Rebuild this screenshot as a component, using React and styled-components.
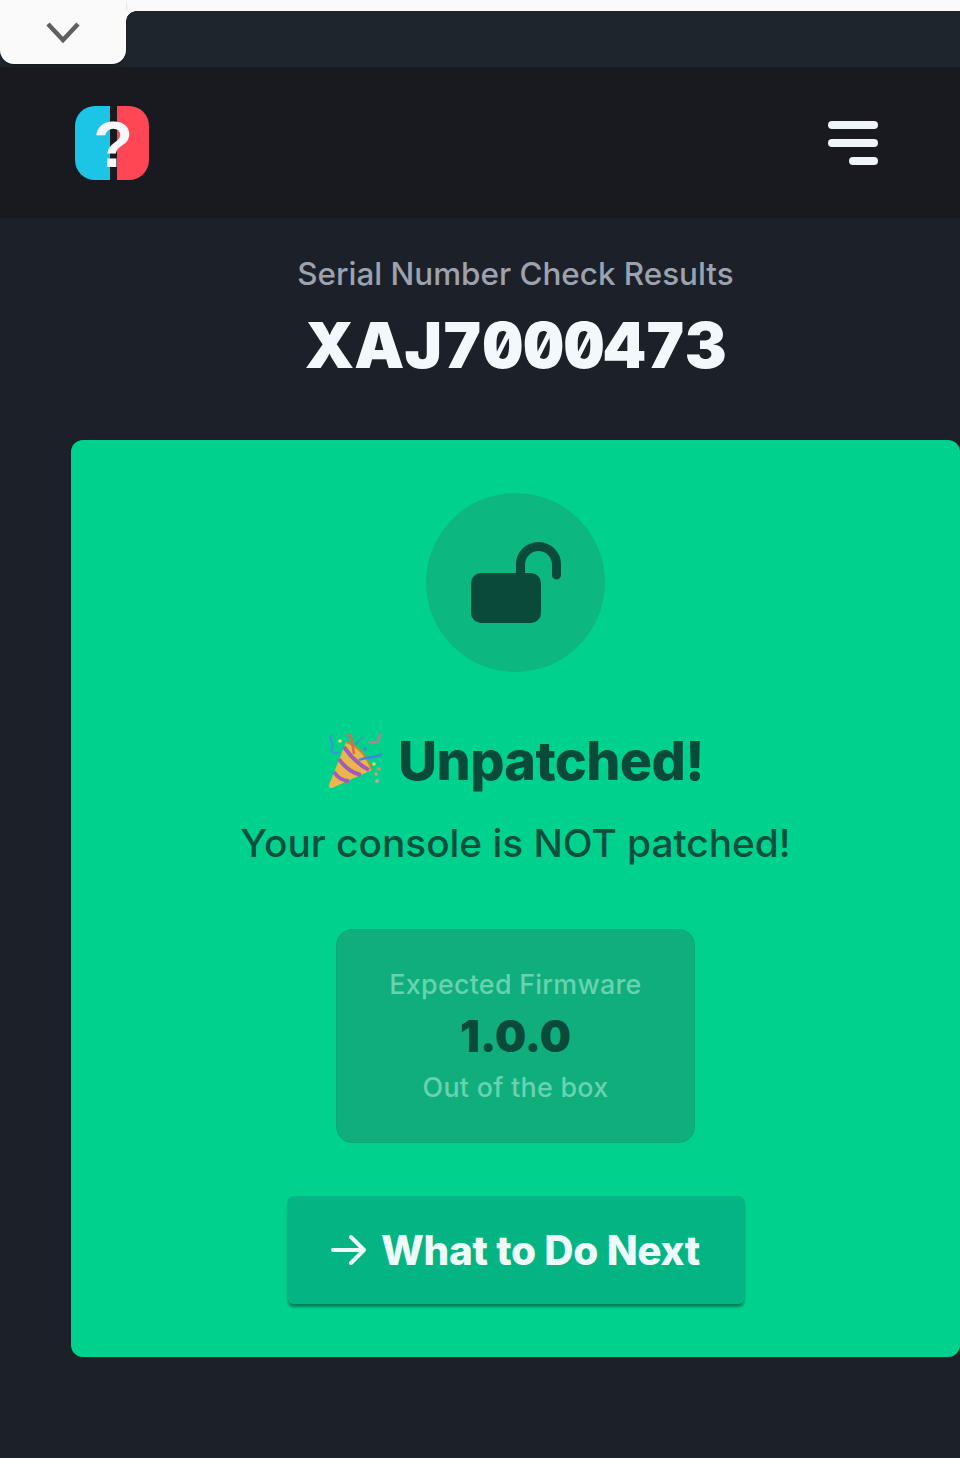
import React from 'react'
import styled, { createGlobalStyle } from 'styled-components'

const GlobalStyle = createGlobalStyle`
  html, body {
    margin: 0;
    padding: 0;
    background: #1c2129;
  }

  * {
    box-sizing: border-box;
  }
`

const Page = styled.div`
  position: relative;
  width: 960px;
  height: 1458px;
  overflow: hidden;
  display: flex;
  flex-direction: column;
  background: #1c2129;
  font-family: Inter, "Liberation Sans", sans-serif;
`

const TopStrip = styled.div`
  height: 11px;
  background: #fafafb;
`

const BrowserBar = styled.div`
  height: 56px;
  background: #1f252c;
`

const CollapseTab = styled.div`
  position: absolute;
  top: 0;
  left: 0;
  width: 126px;
  height: 64px;
  display: flex;
  align-items: center;
  justify-content: center;
  background: #fafafb;
  border-radius: 0 0 14px 14px;
  box-shadow: 0 2px 3px -1px rgba(0, 0, 0, 0.5);

  /* inner rounded corner where the bar starts next to the tab */
  &::after {
    content: '';
    position: absolute;
    top: 11px;
    left: 126px;
    width: 10px;
    height: 10px;
    background: radial-gradient(circle at 100% 100%, transparent 9.5px, #fafafb 10px);
  }
`

const Header = styled.header`
  height: 151px;
  padding: 0 82px 0 75px;
  display: flex;
  align-items: center;
  justify-content: space-between;
  background: #181a20;
`

const Main = styled.main`
  display: flex;
  flex-direction: column;
  align-items: center;
  padding-left: 71px;
`

const Eyebrow = styled.p`
  margin: 36px 0 0;
  font-size: 31.4px;
  line-height: 40px;
  font-weight: 500;
  color: #9ca3af;
`

const SerialNumber = styled.h1`
  margin: 12px 0 0;
  font-family: Inter, "DejaVu Sans Mono", monospace;
  font-size: 63px;
  line-height: 78px;
  font-weight: 900;
  font-variant-numeric: slashed-zero tabular-nums;
  font-feature-settings: "zero" 1, "tnum" 1;
  color: #f3f8fd;
`

const ResultCard = styled.section`
  width: 889px;
  height: 917px;
  margin-top: 56px;
  padding-top: 53px;
  display: flex;
  flex-direction: column;
  align-items: center;
  background: #00d28e;
  border-radius: 12px;
`

const IconCircle = styled.div`
  width: 179px;
  height: 179px;
  display: flex;
  align-items: center;
  justify-content: center;
  border-radius: 50%;
  background: #0cb880;
`

const Headline = styled.h2`
  margin: 57px 0 0;
  display: flex;
  align-items: center;
  gap: 13px;
  font-size: 53.8px;
  line-height: 64px;
  font-weight: 800;
  letter-spacing: -0.6px;
  color: #0a4a3a;
`

const Subline = styled.p`
  margin: 27px 0 0;
  font-size: 38.8px;
  line-height: 46px;
  font-weight: 500;
  color: #0c4f3d;
`

const FirmwareBox = styled.div`
  width: 359px;
  height: 214px;
  margin-top: 63px;
  display: flex;
  flex-direction: column;
  align-items: center;
  padding-top: 37px;
  background: #10ae7c;
  border: 1px solid #0daa79;
  border-radius: 16px;
`

const FirmwareLabel = styled.div`
  font-size: 26.8px;
  line-height: 34px;
  font-weight: 500;
  letter-spacing: 0.3px;
  color: #69d2b0;
`

const FirmwareVersion = styled.div`
  margin-top: 9px;
  font-size: 44px;
  line-height: 52px;
  font-weight: 900;
  color: #0a4a3a;
`

const FirmwareNote = styled(FirmwareLabel)`
  margin-top: 8px;
`

const NextButton = styled.button`
  width: 458px;
  height: 108px;
  margin-top: 53px;
  display: flex;
  align-items: center;
  justify-content: center;
  gap: 14px;
  padding: 0;
  border: none;
  border-radius: 7px;
  background: #04b482;
  box-shadow: 0 4px 3px -1px rgba(5, 80, 60, 0.65);
  font-family: inherit;
  font-size: 40.5px;
  font-weight: 800;
  letter-spacing: -0.3px;
  color: #eefaf9;
`

const ChevronIcon = () => (
  <svg width="34" height="22" viewBox="0 0 34 22" fill="none">
    <path d="M2 3 L17 19 L32 3" stroke="#5f5f5f" strokeWidth="4.5" />
  </svg>
)

const Logo = () => (
  <svg width="74" height="74" viewBox="0 0 74 74" overflow="visible">
    <path d="M35 0 H20 A20 20 0 0 0 0 20 V54 A20 20 0 0 0 20 74 H35 Z" fill="#1cc4e6" />
    <path d="M42 0 H54 A20 20 0 0 1 74 20 V54 A20 20 0 0 1 54 74 H42 Z" fill="#ff4655" />
    <text
      x="38"
      y="61"
      textAnchor="middle"
      fontFamily="'Liberation Sans', sans-serif"
      fontSize="65"
      fontWeight="700"
      fill="#f6f8fa"
    >
      ?
    </text>
  </svg>
)

const MenuIcon = () => (
  <svg width="50" height="44" viewBox="0 0 50 44" fill="#eef4f8">
    <rect x="0" y="0" width="50" height="8" rx="4" />
    <rect x="0" y="18" width="50" height="8" rx="4" />
    <rect x="21" y="36" width="29" height="8" rx="4" />
  </svg>
)

const LockIcon = () => (
  <svg width="90" height="82" viewBox="0 0 90 82" fill="none">
    <rect x="0" y="31" width="70" height="50" rx="10" fill="#0a4a3a" />
    <path
      d="M49.5 34 V22.5 A18 18 0 0 1 85.5 22.5 V33"
      stroke="#0a4a3a"
      strokeWidth="9"
      strokeLinecap="round"
    />
  </svg>
)

const PartyPopper = () => (
  <svg width="58" height="58" viewBox="0 0 58 58" fill="none">
    <path d="M2 53 C1 55 3 57 5 56 L45 38 C40 24 30 13 19 10 Z" fill="#e8b64c" />
    <path d="M7 40 C11 46 16 49 22 49 M12 27 C18 36 26 41 34 43 M17 15 C24 25 32 33 42 38" stroke="#a45bb5" strokeWidth="4" />
    <path d="M19 10 C30 13 40 24 45 38" stroke="#c08a2e" strokeWidth="2" />
    <path d="M5 3 C0 8 9 11 5 16 C3 20 8 23 12 20" stroke="#3f8fdc" strokeWidth="2" />
    <path d="M20 3 C24 2 24 6 25 10 L27 22" stroke="#e0684f" strokeWidth="2.5" />
    <path d="M42 12 C46 6 47 14 51 9 C54 5 50 3 55 3" stroke="#b5808a" strokeWidth="2.5" />
    <path d="M32 28 C40 24 46 27 55 22" stroke="#4a7fe0" strokeWidth="2.5" />
    <path d="M28 13 C32 10 32 6 36 5" stroke="#2f9fb5" strokeWidth="2" />
    <circle cx="13" cy="9" r="1.8" fill="#d9e05b" />
    <circle cx="38" cy="17" r="1.8" fill="#4a7fe0" />
    <circle cx="47" cy="32" r="1.8" fill="#d9e05b" />
    <circle cx="52" cy="37" r="1.8" fill="#d98f6a" />
    <circle cx="49" cy="42" r="1.8" fill="#d9a05b" />
    <circle cx="50" cy="49" r="2" fill="#b9a6a0" />
  </svg>
)

const ArrowIcon = () => (
  <svg width="36" height="32" viewBox="0 0 36 32" fill="none">
    <path
      d="M2 16 H33 M20 3 L33 16 L20 29"
      stroke="#eefaf9"
      strokeWidth="4"
      strokeLinecap="round"
      strokeLinejoin="round"
    />
  </svg>
)

const App = () => (
  <Page>
    <GlobalStyle />
    <TopStrip />
    <BrowserBar />
    <CollapseTab>
      <ChevronIcon />
    </CollapseTab>
    <Header>
      <Logo />
      <MenuIcon />
    </Header>
    <Main>
      <Eyebrow>Serial Number Check Results</Eyebrow>
      <SerialNumber>XAJ7000473</SerialNumber>
      <ResultCard>
        <IconCircle>
          <LockIcon />
        </IconCircle>
        <Headline>
          <PartyPopper />
          Unpatched!
        </Headline>
        <Subline>Your console is NOT patched!</Subline>
        <FirmwareBox>
          <FirmwareLabel>Expected Firmware</FirmwareLabel>
          <FirmwareVersion>1.0.0</FirmwareVersion>
          <FirmwareNote>Out of the box</FirmwareNote>
        </FirmwareBox>
        <NextButton>
          <ArrowIcon />
          What to Do Next
        </NextButton>
      </ResultCard>
    </Main>
  </Page>
)

export default App
